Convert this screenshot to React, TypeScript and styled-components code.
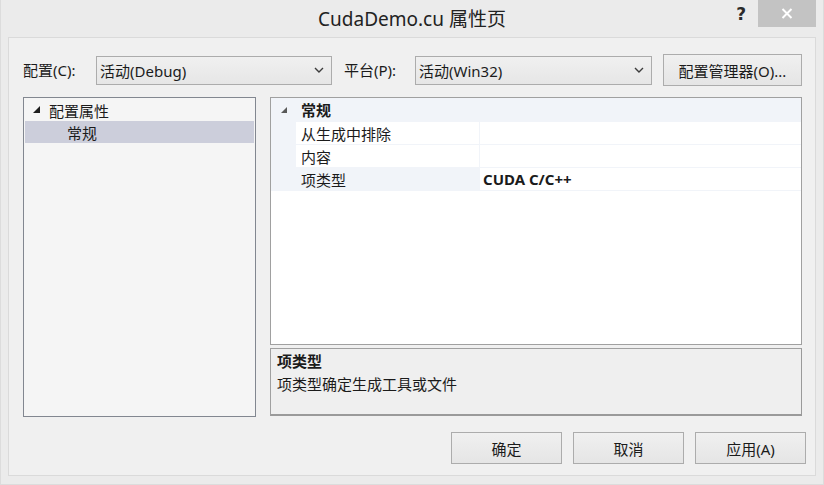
import React from "react";
import styled, { createGlobalStyle } from "styled-components";

const Global = createGlobalStyle`
  html, body { margin: 0; padding: 0; background: #e9e9e9; }
  body { font-family: "Noto Sans", "Noto Sans CJK SC", sans-serif; color: #1b1b1b; }
  * { box-sizing: border-box; }
`;

const Window = styled.div`
  width: 824px;
  height: 485px;
  background: #ebebeb;
  border: 1px solid #dcdcdc;
  border-top: none;
  display: flex;
  flex-direction: column;
  overflow: hidden;
`;

const TitleBar = styled.div`
  height: 37px;
  display: grid;
  grid-template-columns: 1fr auto 1fr;
  align-items: start;
`;

const Title = styled.div`
  font-family: "Noto Sans", "Noto Sans CJK SC", sans-serif;
  font-size: 19px;
  line-height: 24px;
  padding-top: 7px;
  color: #222;
  white-space: nowrap;
`;

const Controls = styled.div`
  display: flex;
  justify-content: flex-end;
  align-items: flex-start;
  padding-right: 7px;
`;

const Help = styled.div`
  font-family: "DejaVu Sans", sans-serif;
  font-weight: bold;
  font-size: 17px;
  line-height: 20px;
  margin-top: 4px;
  margin-right: 12px;
  color: #2a2a2a;
`;

const Close = styled.div`
  width: 58px;
  height: 27px;
  background: #c3c3c3;
  display: flex;
  align-items: center;
  justify-content: center;
`;

const Body = styled.div`
  margin: 0 7px 8px 7px;
  flex: 1;
  background: #f0f0f0;
  border: 1px solid #dadada;
  padding: 16px 13px 0 14px;
  display: flex;
  flex-direction: column;
`;

const ConfigRow = styled.div`
  height: 32px;
  display: flex;
  align-items: center;
`;

const Label = styled.div<{ $w: number; $ml?: number }>`
  width: ${(p) => p.$w}px;
  margin-left: ${(p) => p.$ml ?? 0}px;
  font-size: 15px;
  line-height: 20px;
  white-space: nowrap;
`;

const Combo = styled.div<{ $w: number }>`
  width: ${(p) => p.$w}px;
  height: 29px;
  border: 1px solid #acacac;
  background: linear-gradient(#f0f0f0, #e6e6e6);
  display: flex;
  align-items: center;
  justify-content: space-between;
  padding: 0 7px 0 3px;
  font-size: 15px;
  white-space: nowrap;
`;

const Button = styled.div<{ $w: number; $ml?: number }>`
  width: ${(p) => p.$w}px;
  height: 32px;
  margin-left: ${(p) => p.$ml ?? 0}px;
  border: 1px solid #acacac;
  background: linear-gradient(#f0f0f0, #e5e5e5);
  display: flex;
  align-items: center;
  justify-content: center;
  font-size: 15px;
  white-space: nowrap;
`;

const Main = styled.div`
  margin-top: 11px;
  height: 320px;
  display: flex;
`;

const Tree = styled.div`
  width: 233px;
  border: 1px solid #828790;
  background: #f5f5f5;
  padding: 1px;
`;

const TreeRow = styled.div<{ $selected?: boolean; $indent: number }>`
  height: 22px;
  display: flex;
  align-items: center;
  padding-left: ${(p) => p.$indent}px;
  background: ${(p) => (p.$selected ? "#cccedb" : "transparent")};
  font-size: 15px;
`;

const Expander = styled.svg`
  width: 8px;
  height: 8px;
  margin-right: 8px;
  flex-shrink: 0;
`;

const RightCol = styled.div`
  margin-left: 14px;
  flex: 1;
  display: flex;
  flex-direction: column;
  gap: 3px;
`;

const Grid = styled.div`
  height: 248px;
  border: 1px solid #a0a0a0;
  background: #ffffff;
`;

const GRID_LINE = "#f1f4f9";

const GridRow = styled.div<{ $header?: boolean }>`
  height: ${(p) => (p.$header ? 24 : 23)}px;
  display: flex;
  border-bottom: 1px solid ${GRID_LINE};
  background: ${(p) => (p.$header ? GRID_LINE : "#fff")};
  font-size: 15px;
`;

const Gutter = styled.div`
  width: 25px;
  background: ${GRID_LINE};
  display: flex;
  align-items: center;
  padding-left: 10px;
`;

const NameCell = styled.div<{ $bold?: boolean; $tint?: boolean }>`
  width: 184px;
  padding-left: 5px;
  display: flex;
  align-items: center;
  border-right: 1px solid ${GRID_LINE};
  background: ${(p) => (p.$tint ? GRID_LINE : "transparent")};
  font-weight: ${(p) => (p.$bold ? 700 : 400)};
  white-space: nowrap;
`;

const ValueCell = styled.div<{ $bold?: boolean }>`
  flex: 1;
  padding-left: 3px;
  display: flex;
  align-items: center;
  font-weight: ${(p) => (p.$bold ? 700 : 400)};
  white-space: nowrap;
`;

const Desc = styled.div`
  height: 68px;
  border: 1px solid #a0a0a0;
  border-right-color: #9a9a9a;
  border-bottom: 2px solid #9a9a9a;
  background: #efefef;
  padding: 1px 6px;
  font-size: 15px;
`;

const DescTitle = styled.div`
  font-weight: 700;
  line-height: 22px;
`;

const DescText = styled.div`
  line-height: 24px;
`;

const ButtonRow = styled.div`
  margin-top: 15px;
  margin-right: -4px;
  display: flex;
  justify-content: flex-end;
  gap: 11px;
`;

const Chevron = () => (
  <svg width="10" height="6" viewBox="0 0 10 6">
    <polyline points="1,1 5,5 9,1" fill="none" stroke="#3c3c3c" strokeWidth="1.4" />
  </svg>
);

const TreeTriangle = () => (
  <Expander viewBox="0 0 8 8">
    <polygon points="7,0 7,7 0,7" fill="#1e1e1e" />
  </Expander>
);

const SmallTriangle = () => (
  <svg width="6" height="6" viewBox="0 0 6 6">
    <polygon points="6,0 6,6 0,6" fill="#595959" />
  </svg>
);

export default function App() {
  return (
    <>
      <Global />
      <Window>
        <TitleBar>
          <div />
          <Title>CudaDemo.cu 属性页</Title>
          <Controls>
            <Help>?</Help>
            <Close>
              <svg width="12" height="11" viewBox="0 0 12 11">
                <path d="M1.5 1 L10.5 10 M10.5 1 L1.5 10" stroke="#fff" strokeWidth="2" />
              </svg>
            </Close>
          </Controls>
        </TitleBar>
        <Body>
          <ConfigRow>
            <Label $w={73}>配置(C):</Label>
            <Combo $w={236}>
              <span>活动(Debug)</span>
              <Chevron />
            </Combo>
            <Label $w={71} $ml={12}>平台(P):</Label>
            <Combo $w={237}>
              <span>活动(Win32)</span>
              <Chevron />
            </Combo>
            <Button $w={139} $ml={11}>配置管理器(O)...</Button>
          </ConfigRow>
          <Main>
            <Tree>
              <TreeRow $indent={8}>
                <TreeTriangle />
                配置属性
              </TreeRow>
              <TreeRow $indent={42} $selected>常规</TreeRow>
            </Tree>
            <RightCol>
              <Grid>
                <GridRow $header>
                  <Gutter>
                    <SmallTriangle />
                  </Gutter>
                  <NameCell $bold>常规</NameCell>
                  <ValueCell />
                </GridRow>
                <GridRow>
                  <Gutter />
                  <NameCell>从生成中排除</NameCell>
                  <ValueCell />
                </GridRow>
                <GridRow>
                  <Gutter />
                  <NameCell>内容</NameCell>
                  <ValueCell />
                </GridRow>
                <GridRow>
                  <Gutter />
                  <NameCell $tint>项类型</NameCell>
                  <ValueCell $bold>CUDA C/C++</ValueCell>
                </GridRow>
              </Grid>
              <Desc>
                <DescTitle>项类型</DescTitle>
                <DescText>项类型确定生成工具或文件</DescText>
              </Desc>
            </RightCol>
          </Main>
          <ButtonRow>
            <Button $w={111}>确定</Button>
            <Button $w={111}>取消</Button>
            <Button $w={111}>应用(A)</Button>
          </ButtonRow>
        </Body>
      </Window>
    </>
  );
}
